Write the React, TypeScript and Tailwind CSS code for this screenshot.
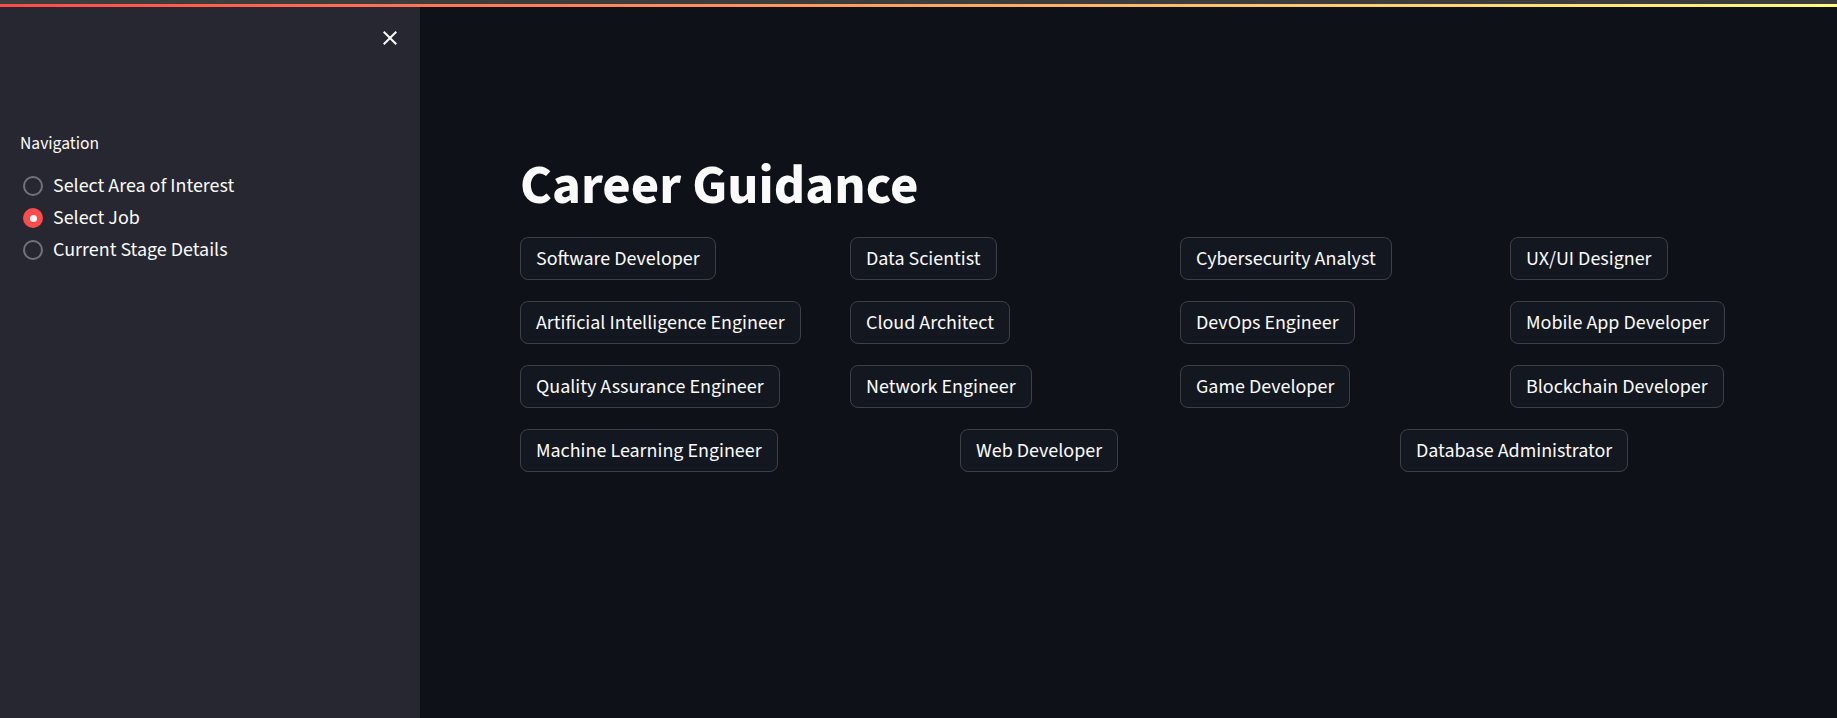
import React from "react";

const FONT = "font-['Source_Sans_3',Lato,'Liberation_Sans',sans-serif]";

const rows4 = [
  ["Software Developer", "Data Scientist", "Cybersecurity Analyst", "UX/UI Designer"],
  ["Artificial Intelligence Engineer", "Cloud Architect", "DevOps Engineer", "Mobile App Developer"],
  ["Quality Assurance Engineer", "Network Engineer", "Game Developer", "Blockchain Developer"],
];
const row3 = ["Machine Learning Engineer", "Web Developer", "Database Administrator"];

function JobButton({ label }: { label: string }) {
  return (
    <div>
      <button
        type="button"
        className="h-[43px] px-[15px] pt-[1px] flex items-center rounded-[8px] border border-[#3d4048] bg-[#131720] text-[20px] leading-[32px] text-[#fafafa] whitespace-nowrap"
      >
        {label}
      </button>
    </div>
  );
}

function Radio({ label, checked }: { label: string; checked?: boolean }) {
  return (
    <div className="flex items-center h-[32px] gap-[10px]">
      <div className="ml-[3px] w-[20px] h-[20px] shrink-0 flex items-center justify-center">
        {checked ? (
          <div className="w-[20px] h-[20px] rounded-full bg-[#ff4b4b] flex items-center justify-center">
            <div className="w-[7px] h-[7px] rounded-full bg-[#fafafa]" />
          </div>
        ) : (
          <div className="w-[20px] h-[20px] rounded-full border-2 border-[#72737a]" />
        )}
      </div>
      <span className="text-[20px] leading-[32px] text-[#fafafa]">{label}</span>
    </div>
  );
}

export default function App() {
  return (
    <div className={`h-[718px] w-full overflow-hidden flex flex-col bg-[#0e1117] ${FONT}`}>
      <div className="h-[4px] bg-[#3c3c3c] shrink-0" />
      <div className="h-[3px] shrink-0 bg-[linear-gradient(90deg,#ff4b4b,#fffd80)]" />
      <div className="flex flex-1 min-h-0">
        <aside className="w-[420px] shrink-0 bg-[#262730] px-[20px] flex flex-col">
          <div className="h-[124.5px] flex justify-end items-start pt-[19px] -mr-[2px]">
            <svg width="24" height="24" viewBox="0 0 24 24" fill="#fafafa">
              <path d="M19 6.41L17.59 5 12 10.59 6.41 5 5 6.41 10.59 12 5 17.59 6.41 19 12 13.41 17.59 19 19 17.59 13.41 12z" />
            </svg>
          </div>
          <div className="text-[17.5px] leading-[24px] text-[#fafafa] mb-[14.5px]">Navigation</div>
          <div className="flex flex-col">
            <Radio label="Select Area of Interest" />
            <Radio label="Select Job" checked />
            <Radio label="Current Stage Details" />
          </div>
        </aside>
        <main className="flex-1 min-w-0 pl-[100px] pt-[145.5px]">
          <div className="w-[1300px]">
            <h1 className="text-[55px] leading-[66px] font-bold text-[#fafafa] h-[66px]">Career Guidance</h1>
            <div className="mt-[18.5px] flex flex-col gap-[21px]">
              {rows4.map((r, i) => (
                <div key={i} className="grid grid-cols-4 gap-x-[20px]">
                  {r.map((l) => (
                    <JobButton key={l} label={l} />
                  ))}
                </div>
              ))}
              <div className="grid grid-cols-3 gap-x-[20px]">
                {row3.map((l) => (
                  <JobButton key={l} label={l} />
                ))}
              </div>
            </div>
          </div>
        </main>
      </div>
    </div>
  );
}
